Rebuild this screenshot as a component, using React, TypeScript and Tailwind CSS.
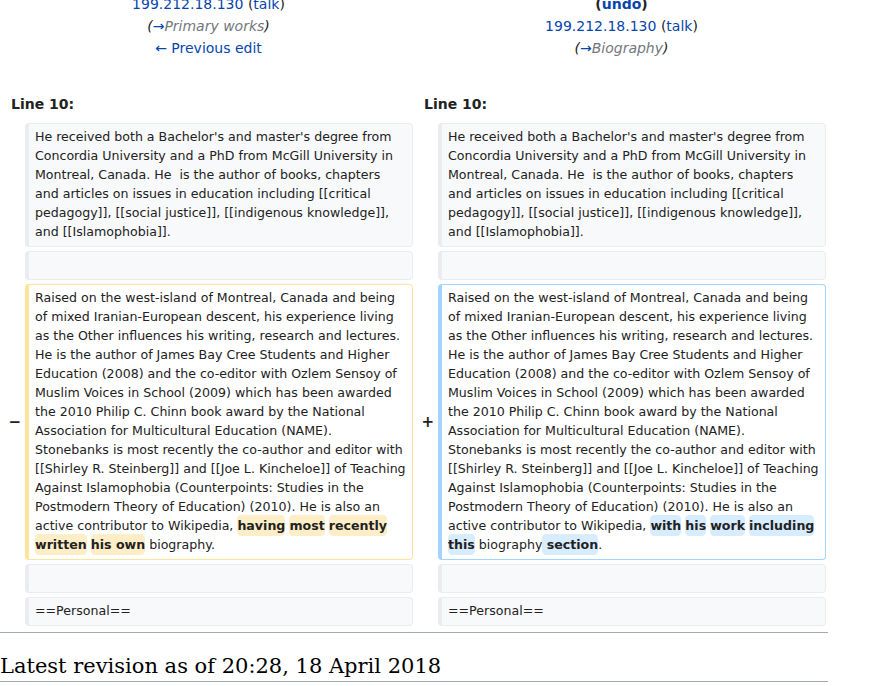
import type { ReactNode } from "react";

const Del = ({ children }: { children: ReactNode }) => (
  <span className="rounded-[0.33em] bg-[#feeec8] py-[0.25em] font-bold">
    {children}
  </span>
);

const Ins = ({ children }: { children: ReactNode }) => (
  <span className="rounded-[0.33em] bg-[#d8ecff] py-[0.25em] font-bold">
    {children}
  </span>
);

const Marker = ({ sign }: { sign?: string }) => (
  <div className="flex items-center justify-end text-[15px] font-bold text-[#222]">
    {sign}
  </div>
);

const Box = ({
  kind = "context",
  children,
}: {
  kind?: "context" | "del" | "ins";
  children?: ReactNode;
}) => {
  const tone =
    kind === "del"
      ? "border-[#ffe49c] bg-white"
      : kind === "ins"
        ? "border-[#a3d3ff] bg-white"
        : "border-[#eaecf0] bg-[#f8f9fa]";
  return (
    <div
      className={`rounded-[4px] border border-l-4 px-[6px] pt-[3px] pb-[5px] text-[12.6px] leading-[19px] break-words ${tone}`}
    >
      {children ?? "\u00a0"}
    </div>
  );
};

const Section = ({ name }: { name: string }) => (
  <div className="italic">
    <span className="text-[#222]">(</span>
    <span className="text-[#0645ad]">→</span>
    <span className="text-[#72777d]">{name}</span>
    <span className="text-[#222]">)</span>
  </div>
);

const Talk = () => (
  <div>
    <span className="text-[#0645ad]">199.212.18.130</span>{" "}
    <span className="text-[#222]">
      (<span className="text-[#0645ad]">talk</span>)
    </span>
  </div>
);

const first = (
  <>
    He received both a Bachelor's and master's degree from Concordia
    University and a PhD from McGill University in Montreal, Canada. He&nbsp;
    is the author of books, chapters and articles on issues in education
    including [[critical pedagogy]], [[social justice]], [[indigenous
    knowledge]], and [[Islamophobia]].
  </>
);

const common =
  "Raised on the west-island of Montreal, Canada and being of mixed Iranian-European descent, his experience living as the Other influences his writing, research and lectures. He is the author of James Bay Cree Students and Higher Education (2008) and the co-editor with Ozlem Sensoy of Muslim Voices in School (2009) which has been awarded the 2010 Philip C. Chinn book award by the National Association for Multicultural Education (NAME). Stonebanks is most recently the co-author and editor with [[Shirley R. Steinberg]] and [[Joe L. Kincheloe]] of Teaching Against Islamophobia (Counterpoints: Studies in the Postmodern Theory of Education) (2010). He is also an active contributor to Wikipedia, ";

export default function App() {
  return (
    <div className="w-[874px] h-[686px] overflow-hidden bg-white font-['DejaVu_Sans',sans-serif] text-[#222]">
      <div className="grid w-[829px] grid-cols-[17px_388px_17px_388px] gap-[4px] p-[4px] pt-0 -mt-[7px]">
        <div className="col-span-2 text-center text-[14px] leading-[22px]">
          <Talk />
          <Section name="Primary works" />
          <div className="text-[#0645ad]">← Previous edit</div>
        </div>
        <div className="col-span-2 text-center text-[14px] leading-[22px]">
          <div className="font-bold text-[#222]">
            (<span className="text-[#0645ad]">undo</span>)
          </div>
          <Talk />
          <Section name="Biography" />
        </div>

        <div className="col-span-2 px-[7px] pt-[30px] pb-[4px] text-[14px] font-bold leading-[22px]">
          Line 10:
        </div>
        <div className="col-span-2 px-[7px] pt-[30px] pb-[4px] text-[14px] font-bold leading-[22px]">
          Line 10:
        </div>

        <Marker />
        <Box>{first}</Box>
        <Marker />
        <Box>{first}</Box>

        <Marker />
        <Box />
        <Marker />
        <Box />

        <Marker sign="−" />
        <Box kind="del">
          {common}
          <Del>having</Del> <Del>most</Del> <Del>recently</Del>{" "}
          <Del>written</Del> <Del>his own</Del> biography.
        </Box>
        <Marker sign="+" />
        <Box kind="ins">
          {common}
          <Ins>with</Ins> <Ins>his</Ins> <Ins>work</Ins> <Ins>including</Ins>{" "}
          <Ins>this</Ins> biography<Ins> section</Ins>.
        </Box>

        <Marker />
        <Box />
        <Marker />
        <Box />

        <Marker />
        <Box>==Personal==</Box>
        <Marker />
        <Box>==Personal==</Box>
      </div>

      <div className="mt-[2px] h-px w-[828px] bg-[#a2a9b1]" />

      <h2 className="mt-[19px] w-[828px] border-b border-[#a2a9b1] font-['DejaVu_Serif',serif] text-[21px] leading-[29px] text-black">
        Latest revision as of 20:28, 18 April 2018
      </h2>
    </div>
  );
}
